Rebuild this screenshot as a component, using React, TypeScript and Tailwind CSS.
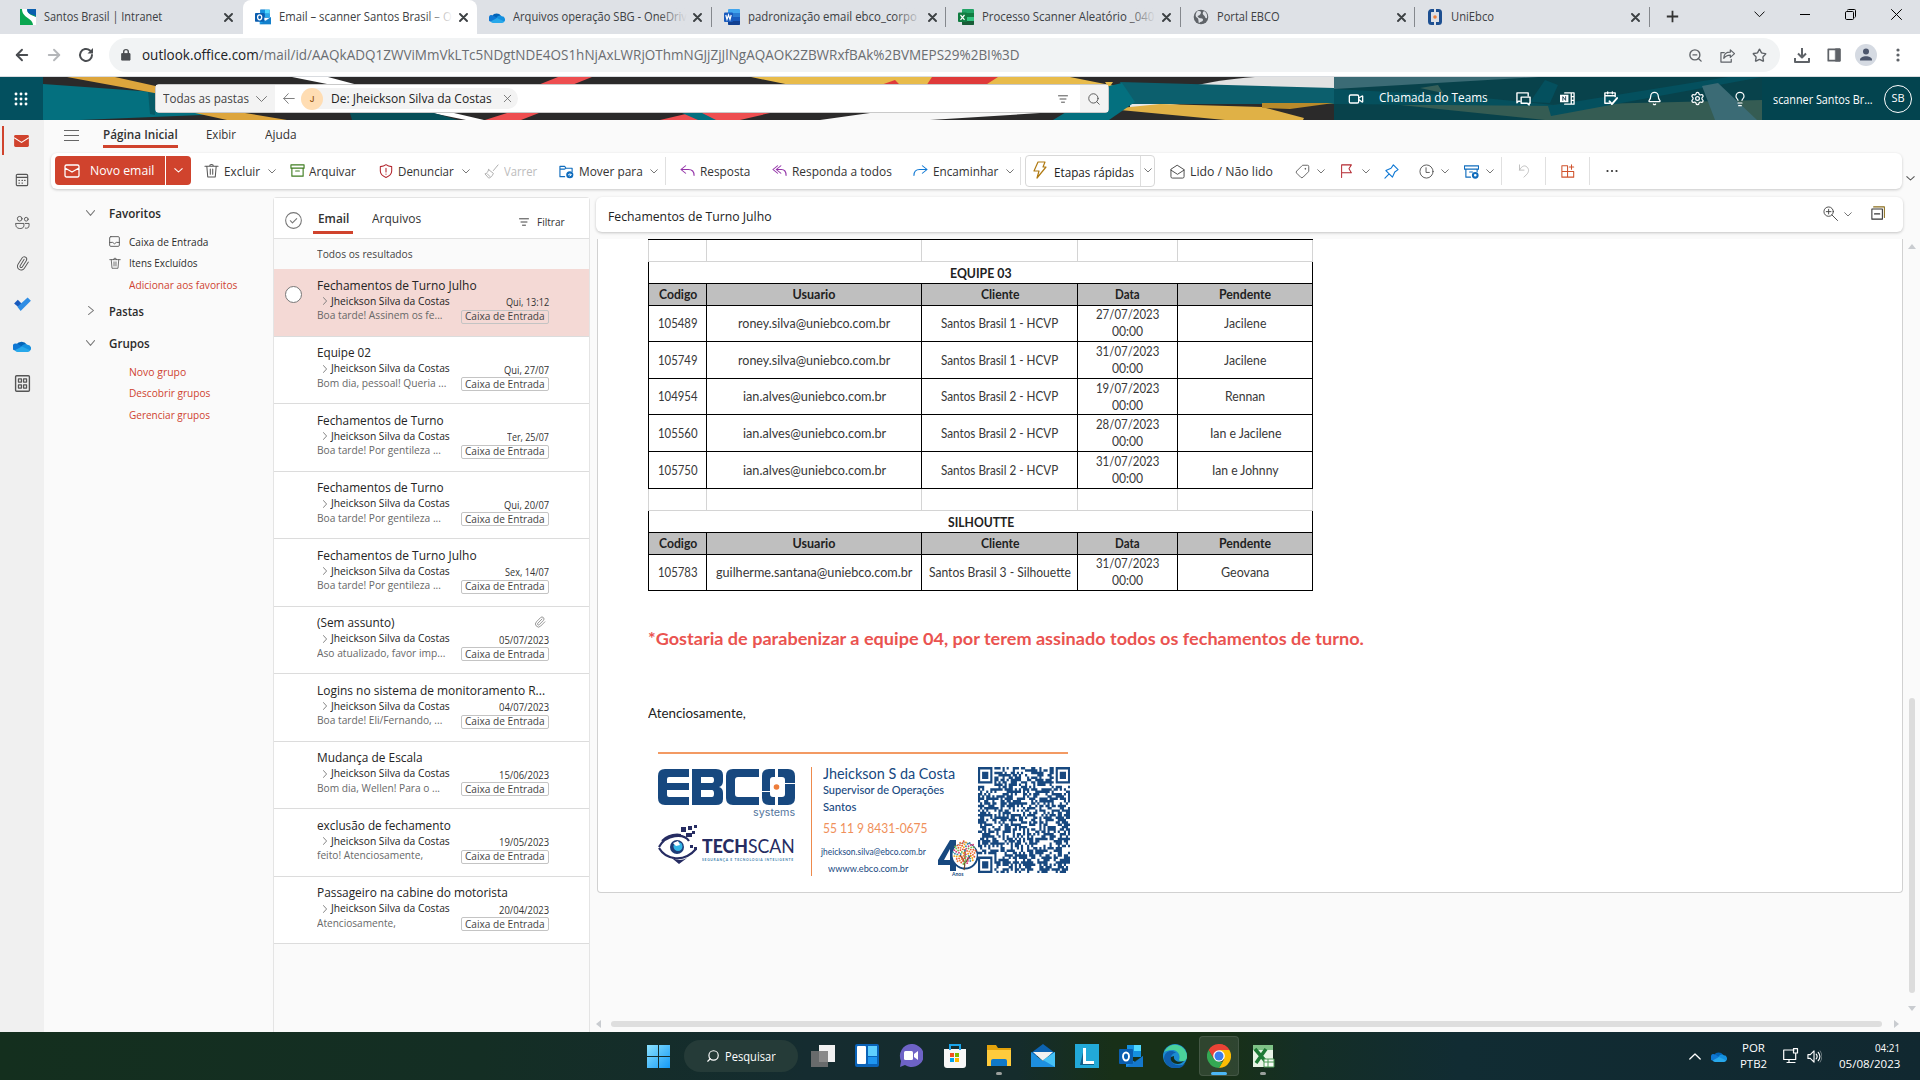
import React, { useLayoutEffect, useRef, useState } from "react";
import {
  ArrowLeft, ArrowRight, Bell, ChevronUp, Lightbulb, Paperclip, Search, Settings, Star, Tag, Video, X, ZoomIn, ZoomOut,
} from "lucide-react";

type TextProps = { w: number; className?: string; children: React.ReactNode };

/** One line of text condensed to a given width. */
function Fit({ w, className = "", children }: TextProps) {
  const ref = useRef<HTMLSpanElement>(null);
  const [scale, setScale] = useState(1);
  useLayoutEffect(() => {
    if (ref.current) setScale(w / ref.current.offsetWidth);
  }, [w]);
  return (
    <span className={"block shrink-0 whitespace-nowrap " + className} style={{ width: w }}>
      <span ref={ref} className="inline-block origin-left" style={{ transform: `scaleX(${scale})` }}>
        {children}
      </span>
    </span>
  );
}

type IcoProps = { className?: string; children: React.ReactNode; box?: string };
function Ico({ className = "", children, box = "0 0 16 16" }: IcoProps) {
  return (
    <svg viewBox={box} preserveAspectRatio="none" className={"block shrink-0 " + className} fill="none" stroke="currentColor" strokeWidth="1" strokeLinecap="round" strokeLinejoin="round">
      {children}
    </svg>
  );
}

const Chev = ({ className = "" }: { className?: string }) => (
  <Ico box="0 0 8 5" className={"h-[5px] w-2 text-[#777] " + className}><path d="M.7.7 4 4 7.3.7" /></Ico>
);

const OneDrive = ({ className = "" }: { className?: string }) => (
  <svg viewBox="0 0 20 14" preserveAspectRatio="none" className={"block shrink-0 " + className}>
    <path d="M4 5a6 5 0 0 1 11 0l-6 5H2a4 4 0 0 1 2-5Z" fill="#0364b8" />
    <path d="M1.500 12A4 4 0 0 1 5 4.500l7 4.500-6 4H4Z" fill="#0f78d4" />
    <path d="M9 8c2-4 6-4 7-2.500A4 4 0 0 1 18 13L8 11Z" fill="#1490df" />
    <path d="m2 12 8-4.500 9 4.500a3.500 3.500 0 0 1-2.500 2H5a4 4 0 0 1-3-2Z" fill="#28a8ea" />
  </svg>
);

const OutlookLogo = ({ className = "" }: { className?: string }) => (
  <svg viewBox="0 0 24 24" preserveAspectRatio="none" className={"block shrink-0 " + className}>
    <path d="M8 1h14v12H8Z" fill="#0f6cbd" />
    <path d="M15 1h7v6h-7Z" fill="#50d9ff" /><path d="M8 1h7v6H8Z" fill="#1490df" /><path d="M15 7h7v6h-7Z" fill="#28a8ea" />
    <path d="m7 12 9 6 8-6v11H7Z" fill="#1a9fe8" /><path d="m7 23 17-11v11Z" fill="#1066b5" opacity=".55" />
    <rect y="6" width="14" height="13" rx="1" fill="#0a5eb0" />
    <ellipse cx="7" cy="12.500" rx="3.100" ry="3.700" fill="none" stroke="#fff" strokeWidth="1.900" />
  </svg>
);

const OfficeDoc = ({ kind }: { kind: "W" | "X" }) => (
  <svg viewBox="0 0 16 16" className="block size-4 shrink-0">
    <rect x="4" width="12" height="16" rx="1" fill={kind === "W" ? "#41a5ee" : "#21a366"} />
    <path d="M4 4h12v4H4Z" fill={kind === "W" ? "#2b7cd3" : "#107c41"} />
    <path d="M4 8h12v4H4Z" fill={kind === "W" ? "#185abd" : "#33c481"} />
    <path d="M4 12h12v3a1 1 0 0 1-1 1H5a1 1 0 0 1-1-1Z" fill={kind === "W" ? "#103f91" : "#185c37"} />
    <rect y="3.500" width="9" height="9.500" rx="1" fill={kind === "W" ? "#185abd" : "#107c41"} />
    <path d={kind === "W" ? "m1.800 6 1.200 4.500L4.500 6 6 10.500 7.200 6" : "m2.500 6 4 4.800M6.500 6l-4 4.800"} stroke="#fff" strokeWidth="1.200" fill="none" />
  </svg>
);

const SantosLogo = () => (
  <svg viewBox="0 0 16 16" className="block size-4 shrink-0">
    <path d="M0 0h16v16H0Z" fill="#0aa650" /><path d="M8 0h8v8Z" fill="#0b66b0" /><path d="M2 0h6c-2 4 3 6 8 8v8h-3C13 9 2 9 2 0Z" fill="#fff" /><path d="M7 0h9v6C10 6 7 4 7 0Z" fill="#0b5fae" />
  </svg>
);
const Globe = () => (
  <svg viewBox="0 0 16 16" className="block size-4 shrink-0"><circle cx="8" cy="8" r="7.300" fill="#5f6368" /><path d="M4 2.500c3-1 5 0 3.500 2.500S4 6 5 8s5.500.5 5 3-3 1-4 3.500C5 12 6 10 4.500 9S1.500 7 4 2.500Zm7-.5c3 2 3.500 4.500 3 7-2 1-1.500-1.500-3-2.500s-2-3 0-4.500Z" fill="#dee1e6" /></svg>
);
const UniLogo = () => (
  <svg viewBox="0 0 16 16" className="block size-4 shrink-0"><path d="M7 1.500H4.500a2 2 0 0 0-2 2v9a2 2 0 0 0 2 2H7M9 1.500h2.500a2 2 0 0 1 2 2v9a2 2 0 0 1-2 2H9" fill="none" stroke="#1d4f91" strokeWidth="3" /><circle cx="8" cy="8" r="1.800" fill="#f0803c" /></svg>
);

const tabs = [
  { icon: <SantosLogo />, text: "Santos Brasil | Intranet", w: 118 },
  { icon: <OutlookLogo className="size-4" />, text: "Email – scanner Santos Brasil – O", w: 173, active: true, fade: true },
  { icon: <OneDrive className="h-[11px] w-4" />, text: "Arquivos operação SBG - OneDriv", w: 174, fade: true },
  { icon: <OfficeDoc kind="W" />, text: "padronização email ebco_corpo", w: 169, fade: true },
  { icon: <OfficeDoc kind="X" />, text: "Processo Scanner Aleatório _040", w: 172, fade: true },
  { icon: <Globe />, text: "Portal EBCO", w: 63 },
  { icon: <UniLogo />, text: "UniEbco", w: 43 },
];

function Browser() {
  return (
    <div>
      <div className="flex h-[34px] bg-[#dee1e6] pl-2">
        {tabs.map((t, i) => (
          <div key={t.text} className={"flex w-[234.500px] shrink-0 items-center pl-3 pr-[10px] " + (t.active ? "rounded-t-lg bg-white" : "")}>
            {t.icon}
            <div className="relative ml-2 w-[174px] overflow-hidden">
              <Fit w={t.w} className="text-[12.500px] leading-5 text-[#3c4043]">{t.text}</Fit>
              {t.fade && <div className={"absolute inset-y-0 right-0 w-7 bg-linear-to-r from-transparent " + (t.active ? "to-white" : "to-[#dee1e6]")} />}
            </div>
            <Ico box="0 0 9 9" className="ml-[6px] size-[9px] text-[#3c4043]"><path d="m1 1 7 7M8 1 1 8" strokeWidth="1.900" /></Ico>
            <div className={"ml-auto -mr-[10px] h-5 w-px " + (i > 1 ? "bg-[#85888d]" : "")} />
          </div>
        ))}
        <Ico className="mt-[10px] ml-4 size-[13px] text-[#333]"><path d="M8 1v14M1 8h14" strokeWidth="2.200" strokeLinecap="butt" /></Ico>
        <div className="ml-auto flex items-start gap-[35px] pt-[9px] pr-[18px] text-black">
          <Ico box="0 0 11 8" className="mt-[2px] h-[7px] w-[11px]"><path d="m.8 1 4.700 5.500L10.200 1" /></Ico>
          <Ico box="0 0 10 10" className="size-[10px]"><path d="M0 5.500h10" /></Ico>
          <Ico box="0 0 11 11" className="size-[11px]"><path d="M.5 3.500q0-1 1-1h6q1 0 1 1v6q0 1-1 1h-6q-1 0-1-1ZM2.500 1q.5-.5 1-.5h6q1 0 1 1v6q0 .7-.6 1" /></Ico>
          <Ico box="0 0 11 11" className="size-[11px]"><path d="m.5.5 10 10M10.500.5l-10 10" /></Ico>
        </div>
      </div>
      <div className="flex h-[43px] items-center border-b border-[#d9dce0] bg-white pl-[13px]">
        <ArrowLeft className="size-[18px] text-[#4a4d51]" strokeWidth={2.500} />
        <ArrowRight className="ml-[14px] size-[18px] text-[#b5b7ba]" strokeWidth={2.500} />
        <Ico className="ml-[15px] size-4 text-[#4a4d51]"><path d="M14 8a6 6 0 1 1-2-4.500" strokeWidth="2" /><path d="M15 1v5.500H9.500Z" fill="currentColor" stroke="none" /></Ico>
        <div className="ml-[15px] flex h-[34px] w-[1671px] items-center rounded-full bg-[#f1f3f4] pr-[13px] pl-[12px]">
          <Ico box="0 0 10 13" className="h-[12px] w-[10px] text-[#4a4d51]"><path d="M1 5h8v7H1Z" fill="currentColor" /><path d="M2.700 5V3a2.300 2.300 0 0 1 4.600 0v2" strokeWidth="1.400" /></Ico>
          <Fit w={878} className="ml-[11px] text-[14px] leading-5 text-[#6a6d71]"><span className="text-[#202124]">outlook.office.com</span>/mail/id/AAQkADQ1ZWViMmVkLTc5NDgtNDE4OS1hNjAxLWRjOThmNGJjZjJlNgAQAOK2ZBWRxfBAk%2BVMEPS29%2BI%3D</Fit>
          <div className="ml-auto flex items-center gap-[17px] text-[#5f6368]">
            <ZoomOut className="size-[15px]" strokeWidth={2.200} />
            <Ico className="size-[15px]"><path d="M4.500 5H1v10h11v-3M4 11c0-5 3-6.500 7-6.500V2l4.500 4L11 10V7.500C8 7.500 6 8 4 11Z" strokeWidth="1.300" /></Ico>
            <Star className="size-[15px]" strokeWidth={2.200} />
          </div>
        </div>
        <div className="ml-[14px] flex items-center text-[#5f6368]">
          <Ico className="size-4"><path d="M8 1v9M4 6.500 8 10.500l4-4M1 11v4h14v-4" strokeWidth="2" strokeLinecap="butt" /></Ico>
          <Ico className="ml-[17px] h-[14px] w-[14px]"><path d="M1.500 1.500h13v13h-13Z" strokeWidth="2" /><path d="M10 1h5v14h-5Z" fill="currentColor" /></Ico>
          <svg viewBox="0 0 22 22" className="ml-[14px] block size-[22px]"><circle cx="11" cy="11" r="11" fill="#d5dae2" /><circle cx="11" cy="7.500" r="3" fill="#4c566c" /><path d="M5 16c0-5 12-5 12 0v.5H5Z" fill="#4c566c" /></svg>
          <svg viewBox="0 0 4 14" className="ml-[19px] block h-[14px] w-1" fill="#5f6368"><circle cx="2" cy="2" r="1.600" /><circle cx="2" cy="7" r="1.600" /><circle cx="2" cy="12" r="1.600" /></svg>
        </div>
      </div>
    </div>
  );
}

function Suite() {
  return (
    <header className="relative h-[43px] overflow-hidden text-white">
      <svg viewBox="0 0 1920 43" className="absolute inset-0 block h-[43px] w-[1920px]">
        <path d="M0 0h1920v43H0Z" fill="#2b2a2a" />
        <path d="m43 7 112 8 95 21-170 7H43Z" fill="#04707f" /><path d="m148 14 7 1v23l-5-1Z" fill="#075a66" />
        <path d="M67 0h48l45 10v7Q110 8 67 0Z" fill="#dda53c" />
        <path d="M195 36h50l42 7h-60Z" fill="#dda53c" />
        <path d="M292 0h36l30 8h-26ZM432 36h22l30 7h-18Z" fill="#fff" />
        <path d="M558 0h34l-20 8h-34ZM507 36h32l-18 7h-36Z" fill="#ee4e50" />
        <path d="M350 36h84l24 7H352Z" fill="#074f58" />
        <path d="M751 0h319l50 10H800Z" fill="#e8bb4b" />
        <path d="m932 0h66l-14 9h-58ZM878 9l17-6 6 6Z" fill="#df3a3a" />
        <path d="m690 36 80 0-30 7h-80Z" fill="#ee4e50" /><path d="M682 36h20l14 7h-18Z" fill="#04707f" />
        <path d="M870 36h170l-110 7H820Z" fill="#f7f7f7" />
        <path d="M1195 9q20-6 60-9h79v14Z" fill="#e2e2e2" /><path d="m1130 26 50 1-50 5Z" fill="#e8e8e8" />
        <path d="m1120 31 40-4 102 3 42 11-1 2h-78l-105-10Z" fill="#e0b146" />
        <path d="m1120 5 214 6v16h-204Z" fill="#0c5f6d" /><path d="M1262 26h72l-44 6-28-1Z" fill="#b98a2a" />
        <path d="m1105 5 8 0-4 6Z" fill="#e8bb4b" />
        <path d="m1053 43 56-34 13-3 13 19-26 18Z" fill="#04707f" />
        <path d="M1334 0h586v43h-586Z" fill="#08424b" />
        <path d="M1334 0h205l-205 12Z" fill="#3b6b75" /><path d="m1420 11 18-3 5 8Z" fill="#365f59" />
        <path d="m1400 28 150 0 212-5v20h-217Z" fill="#355c53" /><path d="m1334 12 130 7 100 10-230-2Z" fill="#05505d" />
        <path d="m1548 29 180-29h34L1551 39Z" fill="#04505e" /><path d="m1530 25 15-22 13 5-8 18Z" fill="#04505e" />
        <path d="m1702 9 16-3 39 37h-42Z" fill="#3b6b75" />
        <path d="M1762 0h158v43h-158Z" fill="#03444f" /><path d="M0 0h43v43H0Z" fill="#03505f" />
      </svg>
      <div className="relative flex h-full items-center">
        <svg viewBox="0 0 14 14" className="ml-[14px] block size-[14px]" fill="#fff">
          {[2, 7, 12].map((y) => [2, 7, 12].map((x) => <circle key={`${x}${y}`} cx={x} cy={y} r="1.450" />))}
        </svg>
        <div className="ml-[127px] flex h-[29px] w-[954px] items-center rounded-sm border border-[#c9c9c9] bg-white text-[#444]">
          <div className="flex h-full w-[119px] items-center bg-[#f3f3f3] pl-[7px]">
            <Fit w={86} className="text-[13px]">Todas as pastas</Fit><Ico box="0 0 11 6" className="ml-[7px] h-[6px] w-[11px] text-[#777]"><path d="m.5.5 5 5 5-5" /></Ico>
          </div>
          <Ico className="ml-[8px] h-[11px] w-[12px] text-[#777]"><path d="M7 1 1 8l6 7M1 8h14" strokeWidth="1.300" /></Ico>
          <div className="ml-[6px] flex h-[21px] w-[217px] items-center rounded-full bg-[#f3f3f3]">
            <div className="flex size-[22px] shrink-0 items-center justify-center rounded-full bg-[#ffddb3] font-['Inter'] text-[8px] font-medium text-[#8a4b08]">J</div>
            <Fit w={161} className="ml-[8px] text-[13px] text-[#222]">De: Jheickson Silva da Costas</Fit>
            <X className="ml-[9px] size-[13px] text-[#666]" strokeWidth={1.500} />
          </div>
          <Ico box="0 0 10 8" className="mr-[12px] ml-auto h-2 w-[10px] text-[#555]"><path d="M.5.8h9M2 4h6M3.500 7.200h3" /></Ico>
          <div className="flex h-full w-7 items-center justify-center bg-[#f3f3f3]"><Search className="size-[14px] text-[#555]" strokeWidth={1.600} /></div>
        </div>
        <Video className="ml-[239px] size-4" strokeWidth={2} />
        <Fit w={109} className="ml-[15px] text-[12.500px] font-medium">Chamada do Teams</Fit>
        <Ico className="ml-[28px] size-[15px]"><path d="M4 11H2.500L1 12.500V2h12v3M5.500 6.500H15V13h-1v2l-2-2H5.500Z" strokeWidth="1.500" /></Ico>
        <Ico className="ml-[29px] size-[15px]"><path d="M5 2h10v12H5M12 2v12M12 6h3M12 10h3" strokeWidth="1.400" /><path d="M0 4h9v8H0Z" fill="#fff" stroke="none" /><path d="M3 10V6l3 4V6" stroke="#245" /></Ico>
        <Ico className="ml-[28px] size-[15px]"><path d="M7 13H2V2h11v4M2 5h11M5 1v2M10 1v2" strokeWidth="1.500" /><path d="m7 11 2.500 3L15 7.500" strokeWidth="2" /></Ico>
        <Bell className="ml-[29px] size-[15px]" strokeWidth={2} />
        <Settings className="ml-[28px] size-[15px]" strokeWidth={2} />
        <Lightbulb className="ml-[27px] size-[16px]" strokeWidth={1.800} />
        <Fit w={100} className="ml-[25px] pt-[2px] text-[12px]">scanner Santos Br...</Fit>
        <div className="ml-[11px] flex size-7 items-center justify-center rounded-full border border-white text-[11px]">SB</div>
      </div>
    </header>
  );
}

const MailIcon = ({ className = "" }: { className?: string }) => (
  <Ico className={className}><path d="M2.500 2h11A1.500 1.500 0 0 1 15 3.500v9a1.500 1.500 0 0 1-1.500 1.500h-11A1.500 1.500 0 0 1 1 12.500v-9A1.500 1.500 0 0 1 2.500 2ZM1 5l7 4 7-4" strokeWidth="1.300" /></Ico>
);
const TrashIcon = ({ className = "" }: { className?: string }) => (
  <Ico className={className}><path d="M1 3.500h14M3 3.500 4 15h8l1-11.500M6 3.500a2 2 0 0 1 4 0M6.700 6.500v5.500M9.300 6.500v5.500" strokeWidth="1.100" /></Ico>
);

const Label = ({ w, m, className = "text-[#333]", children }: { w: number; m: string; className?: string; children: string }) => (
  <Fit w={w} className={m + " -mt-px text-[13px] leading-5 " + className}>{children}</Fit>
);

const Sep = ({ m }: { m: string }) => <div className={"h-7 w-px bg-[#e0e0e0] " + m} />;

function Ribbon() {
  return (
    <div className="relative mx-[7px] mr-[18px] flex h-9 items-center rounded-md bg-white pl-1 shadow-[0_1px_3px_rgba(0,0,0,0.2)]">
      <div className="-mt-px flex h-[29px] w-[110px] items-center rounded-l bg-[#d0432d] pl-[9px] text-white">
        <MailIcon className="size-4" /><Fit w={64} className="ml-[10px] text-[13px] font-medium">Novo email</Fit>
      </div>
      <div className="-mt-px ml-px flex h-[29px] w-[25px] items-center justify-center rounded-r bg-[#d0432d]"><Ico box="0 0 8 5" className="h-[5px] w-[9px] text-white"><path d="M.7.7 4 4 7.300.7" /></Ico></div>
      <TrashIcon className="ml-[13px] -mt-px size-[15px] text-[#555]" /><Label w={36} m="ml-[5px]">Excluir</Label><Chev className="ml-2" />
      <Ico className="ml-[14px] -mt-px size-[15px] text-[#3f7d20]"><path d="M1 2h14v3.500H1ZM2 5.500V14h12V5.500M6 8.500h4" strokeWidth="1.200" /></Ico><Label w={47} m="ml-1">Arquivar</Label>
      <Ico className="ml-[23px] size-[14px] text-[#b3262e]"><path d="M8 .8C10 2.500 12 3 14.500 3v5c0 3-3 6-6.500 7.300C4.500 14 1.500 11 1.500 8V3C4 3 6 2.500 8 .8ZM8 5v4M8 11.500v.2" strokeWidth="1.200" /></Ico><Label w={56} m="ml-[5px]">Denunciar</Label><Chev className="ml-2" />
      <Ico className="ml-[14px] size-[15px] text-[#aaa]"><path d="m15 1-5 6M5 6l5 4-1 2c-1 2-3 3-4 3L1 10.500c2 0 3-2 4-4.500ZM3.500 10.500l3 3" /></Ico><Label w={33} m="ml-[5px]" className="text-[#bcbcbc]">Varrer</Label>
      <Ico className="ml-[22px] size-[15px] text-[#0f6cbd]"><path d="M6 13.500H1V2.500h5l1.500 2H14V8M1 5.500h5L7.500 4.500" strokeWidth="1.200" /><circle cx="11.500" cy="11.500" r="3.800" fill="#0f6cbd" stroke="none" /><path d="M10 11.500h3M11.700 10.200l1.300 1.300-1.300 1.300" stroke="#fff" /></Ico><Label w={64} m="ml-[5px]">Mover para</Label><Chev className="ml-[7px]" />
      <Sep m="ml-[7px]" />
      <Ico className="ml-[14px] h-3 w-[15px] text-[#9333a8]"><path d="M6 1 1 6l5 5M1 6h8c4 0 6 3 6 8" strokeWidth="1.200" /></Ico><Label w={50} m="ml-[5px]">Resposta</Label>
      <Ico className="ml-[22px] h-3 w-[15px] text-[#9333a8]"><path d="M6 1 1 6l5 5M9.500 1l-5 5 5 5M4.500 6H10c3 0 5 3 5 8" strokeWidth="1.200" /></Ico><Label w={100} m="ml-[5px]">Responda a todos</Label>
      <Ico className="ml-[21px] h-3 w-[15px] text-[#0f78d4]"><path d="m10 1 5 5-5 5M15 6H7c-4 0-6 3-6 8" strokeWidth="1.200" /></Ico><Label w={65} m="ml-[5px]">Encaminhar</Label><Chev className="ml-2" />
      <Sep m="ml-[6px]" />
      <div className="ml-[4px] -mt-px flex h-8 w-[130px] items-center rounded border border-[#d8d8d8]">
        <Ico box="0 0 14 18" className="ml-[7px] -mt-px h-[18px] w-[14px] text-[#b07a12]"><path d="M5 1h7l-2 5h3L4 17l2-7H1Z" strokeWidth="1.200" /></Ico><Label w={80} m="ml-[7px]" className="pt-[3px] text-[#222]">Etapas rápidas</Label>
        <div className="ml-[6px] flex h-full w-[14px] items-center justify-center border-l border-[#ddd]"><Chev /></div>
      </div>
      <Ico className="ml-[15px] size-[15px] text-[#444]"><path d="M1 6v7.500A1.500 1.500 0 0 0 2.500 15h11a1.500 1.500 0 0 0 1.500-1.500V6L8 1.500ZM1 6.500l7 4.500 7-4.500" /></Ico><Label w={83} m="ml-[5px]">Lido / Não lido</Label>
      <Tag className="ml-[22px] size-[15px] rotate-90 text-[#555]" strokeWidth={1.400} /><Chev className="ml-[7px]" />
      <Ico className="ml-[15px] h-[14px] w-[13px] text-[#b3262e]"><path d="M2 15.500V1h12l-3 4.500L14 10H2" strokeWidth="1.200" /></Ico><Chev className="ml-[9px] mt-px" />
      <Ico className="ml-[14px] size-[15px] text-[#0f78d4]"><path d="m10 1 5 5-3.500 2.500L9 14 2 7l5.500-2.500ZM5.500 10.500 1 15" strokeWidth="1.200" /></Ico>
      <Ico className="ml-5 size-[15px] text-[#555]"><circle cx="8" cy="8" r="7" /><path d="M7.500 4v5H11" /></Ico><Chev className="ml-[7px]" />
      <Ico className="ml-[15px] size-[15px] text-[#0f6cbd]"><path d="M.5 2h15v3.500H.5ZM2 5.500V14h5M14 5.500V8M6 8.500h3" strokeWidth="1.200" /><circle cx="12" cy="12" r="2.500" strokeWidth="2.200" /></Ico><Chev className="ml-[7px]" />
      <Sep m="ml-[7px]" />
      <Ico className="ml-4 h-[14px] w-3 text-[#bbb]"><path d="M2 1v6h6M2 7c3-5 7-6 10-3.500S14.500 9 12 11.500L8 15" strokeWidth="1.100" /></Ico>
      <Sep m="ml-[15px]" />
      <Ico className="ml-[15px] size-[14px] text-[#d0532d]"><path d="M1 2h6.500v13H1ZM1 8.500h13.500V15h-7M12 1v5M9.500 3.500h5" strokeWidth="1.200" /></Ico>
      <Sep m="ml-[14px]" />
      <svg viewBox="0 0 12 4" className="ml-[16px] h-1 w-[12px]" fill="#333"><circle cx="1.500" cy="2" r="1.100" /><circle cx="6" cy="2" r="1.100" /><circle cx="10.500" cy="2" r="1.100" /></svg>
      <Ico box="0 0 8 5" className="absolute -right-[13px] bottom-2 h-[5px] w-[9px] text-[#555]"><path d="M.7.7 4 4 7.300.7" /></Ico>
    </div>
  );
}

function Rail() {
  return (
    <nav className="flex w-11 shrink-0 flex-col items-center bg-[#f0f0f0] pt-[6px] text-[#555]">
      <div className="flex h-[29px] w-full items-center pl-[2px]"><div className="h-[29px] w-[2px] bg-[#d0432d]" /><svg viewBox="0 0 16 13" className="ml-[10px] block h-3 w-[15px]"><rect width="16" height="13" rx="1.500" fill="#d0432d" /><path d="m0 3 8 5 8-5" fill="none" stroke="#fff" strokeWidth="1.200" /></svg></div>
      <Ico className="mt-[18px] size-[14px]"><path d="M3 1.500h10a1.500 1.500 0 0 1 1.500 1.500v10a1.500 1.500 0 0 1-1.500 1.500H3A1.500 1.500 0 0 1 1.500 13V3A1.500 1.500 0 0 1 3 1.500ZM1.500 5h13M4.500 8.500h.5M8 8.500h.5M11 8.500h.5M4.500 11.500h.5M8 11.500h.5" strokeWidth="1.300" /></Ico>
      <Ico className="mt-[28px] size-[15px]"><circle cx="5" cy="4" r="2.500" /><circle cx="12" cy="4.500" r="2" /><path d="M1 9h8.500v2.500c0 4-8.500 4-8.500 0ZM11 9h4v2c0 3-2 3.500-4 3" /></Ico>
      <Paperclip className="mt-[26px] size-[15px] -rotate-12" strokeWidth={1.500} />
      <svg viewBox="0 0 18 15" className="mt-[26px] block h-[14px] w-[17px]"><path d="m0 7 4-4 5 5-3 4Z" fill="#195abd" /><path d="m3.500 10.500 11-10L18 4 7 15Z" fill="#2f8de4" /></svg>
      <OneDrive className="mt-[29px] h-3 w-[18px]" />
      <Ico className="mt-[23px] size-[17px]"><path d="M2.500.7h11q1 0 1 1v12.600q0 1-1 1h-11q-1 0-1-1V1.700q0-1 1-1Z" strokeWidth="1.300" /><path d="M4.200 3.700h2.800v3H4.200ZM9 3.700h2.800v3H9ZM4.200 9.300h2.800v3H4.200ZM9 9.300h2.800v3H9Z" strokeWidth="1.200" /></Ico>
    </nav>
  );
}

function Folders() {
  const link = "text-[11.500px] leading-[21.500px] text-[#cf4330]";
  const down = <Ico box="0 0 9 5" className="-mt-[2px] h-[6px] w-[9px] text-[#777]"><path d="m.5.5 4 4 4-4" /></Ico>;
  return (
    <aside className="flex w-[229px] shrink-0 flex-col pt-2 pl-[42px] text-[#2b2b2b]">
      <div className="flex h-[34px] items-center">{down}<Fit w={52} className="ml-[14px] text-[13px] font-semibold">Favoritos</Fit></div>
      <div className="-mt-px flex h-[22px] items-center pt-px pl-[23px]"><Ico box="0 0 12 12" className="size-[11px] text-[#555]"><path d="M2 .7h8q1.300 0 1.300 1.300v8q0 1.300-1.300 1.300H2Q.7 11.300.7 10V2Q.7.7 2 .7ZM.7 7H4q2 3 4 0h3.300" /></Ico><Fit w={79} className="ml-[9px] text-[11.500px]">Caixa de Entrada</Fit></div>
      <div className="flex h-[22px] items-center pl-[23px]"><TrashIcon className="-mt-px size-[12px] text-[#555]" /><Fit w={69} className="ml-2 text-[11.500px]">Itens Excluídos</Fit></div>
      <Fit w={108} className={"ml-[43px] " + link}>Adicionar aos favoritos</Fit>
      <div className="mt-[6px] flex h-[20px] items-center pl-[2px]"><Ico box="0 0 5 9" className="-mt-[3px] h-[9px] w-[6px] text-[#777]"><path d="m.5.5 4 4-4 4" /></Ico><Fit w={35} className="ml-[15px] text-[13px] font-semibold">Pastas</Fit></div>
      <div className="mt-[12px] flex h-[20px] items-center">{down}<Fit w={41} className="ml-[14px] text-[13px] font-semibold">Grupos</Fit></div>
      <div className="mt-[7px] ml-[43px]"><Fit w={57} className={link}>Novo grupo</Fit><Fit w={81} className={link}>Descobrir grupos</Fit><Fit w={81} className={link}>Gerenciar grupos</Fit></div>
    </aside>
  );
}

type Mail = { t: string; tw: number; d: string; dw: number; p: string; pw: number; clip?: boolean };
const mails: Mail[] = [
  { t: "Fechamentos de Turno Julho", tw: 160, d: "Qui, 13:12", dw: 43, p: "Boa tarde! Assinem os fe...", pw: 126 },
  { t: "Equipe 02", tw: 54, d: "Qui, 27/07", dw: 45, p: "Bom dia, pessoal! Queria ...", pw: 129 },
  { t: "Fechamentos de Turno", tw: 127, d: "Ter, 25/07", dw: 42, p: "Boa tarde! Por gentileza ...", pw: 124 },
  { t: "Fechamentos de Turno", tw: 127, d: "Qui, 20/07", dw: 45, p: "Boa tarde! Por gentileza ...", pw: 124 },
  { t: "Fechamentos de Turno Julho", tw: 160, d: "Sex, 14/07", dw: 44, p: "Boa tarde! Por gentileza ...", pw: 124 },
  { t: "(Sem assunto)", tw: 78, d: "05/07/2023", dw: 50, p: "Aso atualizado, favor imp...", pw: 128, clip: true },
  { t: "Logins no sistema de monitoramento R...", tw: 228, d: "04/07/2023", dw: 50, p: "Boa tarde! Eli/Fernando, ...", pw: 125 },
  { t: "Mudança de Escala", tw: 106, d: "15/06/2023", dw: 50, p: "Bom dia, Wellen! Para o ...", pw: 123 },
  { t: "exclusão de fechamento", tw: 134, d: "19/05/2023", dw: 50, p: "feito! Atenciosamente,", pw: 106 },
  { t: "Passageiro na cabine do motorista", tw: 191, d: "20/04/2023", dw: 50, p: "Atenciosamente,", pw: 79 },
];

function MailList() {
  return (
    <section className="mt-2 flex w-[317px] shrink-0 flex-col rounded-t border border-b-0 border-[#e4e4e4] bg-[#fafafa]">
      <div className="flex h-[41px] shrink-0 items-start border-b border-[#e0e0e0] bg-white pl-[11px] text-[#333]">
        <Ico className="mt-[14px] size-[17px] text-[#777]"><circle cx="8" cy="8" r="7.400" /><path d="m5 8.200 2 2 4-4" /></Ico>
        <div className="ml-[11px] flex h-[36px] w-[40px] justify-center border-b-[3px] border-[#d0432d] pt-[10px]"><Fit w={31} className="text-[13px] leading-5 font-semibold">Email</Fit></div>
        <Fit w={49} className="mt-[10px] ml-[19px] text-[13px] leading-5">Arquivos</Fit>
        <Ico box="0 0 10 8" className="mt-[20px] ml-[98px] h-2 w-[10px] text-[#444]"><path d="M.5.8h9M2 4h6M3.500 7.200h3" /></Ico>
        <Fit w={28} className="mt-[14px] ml-[8px] text-[11.500px] leading-5">Filtrar</Fit>
      </div>
      <div className="flex h-[30px] shrink-0 items-center pl-[43px] text-[#444]"><Fit w={96} className="text-[11.500px] font-medium">Todos os resultados</Fit></div>
      {mails.map((m, i) => (
        <article key={m.d + m.p} className={"flex h-[67.500px] shrink-0 border-b border-[#dcdcdc] pl-[11px] " + (i === 0 ? "bg-[#f4d9d5]" : "bg-white")}>
          <div className="w-[32px] shrink-0 pt-[17px]">{i === 0 && <div className="size-[17px] rounded-full border border-[#777] bg-white" />}</div>
          <div className="w-[232px] pt-[6px]">
            <div className="flex h-[19px] items-center justify-between"><Fit w={m.tw} className="text-[13px] leading-[18px] text-[#242424]">{m.t}</Fit>{m.clip && <Paperclip className="mr-[3px] size-3 text-[#777]" strokeWidth={1.500} />}</div>
            <div className="flex h-[14px] items-center">
              <Ico box="0 0 5 8" className="ml-[6px] h-[8px] w-[4px] text-[#777]"><path d="m.5.5 4 3.500-4 3.500" /></Ico><Fit w={119} className="-mt-px ml-[4px] text-[11.500px] leading-[14px] text-[#242424]">Jheickson Silva da Costas</Fit>
              <Fit w={m.dw} className="mt-[2px] ml-auto text-[10px] leading-[14px] text-[#333]">{m.d}</Fit>
            </div>
            <div className="flex h-[15px] items-center justify-between"><Fit w={m.pw} className="-mt-px text-[11.500px] leading-[14px] text-[#686868]">{m.p}</Fit>
              <div className="mt-[2px] flex h-[14px] w-[88px] items-center justify-center rounded-[2px] border border-[#c4c4c4]"><Fit w={80} className="-mt-px text-[11px] leading-3 text-[#444]">Caixa de Entrada</Fit></div></div>
          </div>
        </article>
      ))}
    </section>
  );
}

type Row = [string, string, number, string, number, string, string, number];
const team: Row[] = [
  ["105489", "roney.silva@uniebco.com.br", 152, "Santos Brasil 1 - HCVP", 117, "27/07/2023", "Jacilene", 42],
  ["105749", "roney.silva@uniebco.com.br", 152, "Santos Brasil 1 - HCVP", 117, "31/07/2023", "Jacilene", 42],
  ["104954", "ian.alves@uniebco.com.br", 143, "Santos Brasil 2 - HCVP", 117, "19/07/2023", "Rennan", 40],
  ["105560", "ian.alves@uniebco.com.br", 143, "Santos Brasil 2 - HCVP", 117, "28/07/2023", "Ian e Jacilene", 71],
  ["105750", "ian.alves@uniebco.com.br", 143, "Santos Brasil 2 - HCVP", 117, "31/07/2023", "Ian e Johnny", 67],
];
const sil: Row[] = [["105783", "guilherme.santana@uniebco.com.br", 196, "Santos Brasil 3 - Silhouette", 142, "31/07/2023", "Geovana", 48]];
const cols = "grid grid-cols-[58px_215px_156px_100px_135px]";
const cell = "flex flex-col items-center justify-center border-r border-b border-black";

function TableRow({ r, short }: { r: Row; short?: boolean }) {
  return (
    <div className={cols + " border-l border-black leading-[17px] text-[#383838] " + (short ? "h-9" : "h-[37px]")}>
      <div className={cell}><Fit w={40}>{r[0]}</Fit></div>
      <div className={cell}><Fit w={r[2]}>{r[1]}</Fit></div>
      <div className={cell}><Fit w={r[4]}>{r[3]}</Fit></div>
      <div className={cell}><Fit w={63}>{r[5]}</Fit><Fit w={31}>00:00</Fit></div>
      <div className={cell}><Fit w={r[7]}>{r[6]}</Fit></div>
    </div>
  );
}
function TableHead({ title, w }: { title: string; w: number }) {
  return (
    <>
      <div className={cols + " h-[22px] border-l border-[#d4d4d4]"}>{[0, 1, 2, 3, 4].map((i) => <div key={i} className="border-r border-b border-[#d4d4d4]" />)}</div>
      <div className="flex h-[22px] items-center justify-center border-x border-b border-black pt-[3px]"><Fit w={w} className="font-bold">{title}</Fit></div>
      <div className={cols + " h-[21px] border-l border-black bg-[#bfbfbf] font-bold"}>
        <div className={cell + " pt-[2px]"}><Fit w={38}>Codigo</Fit></div><div className={cell + " pt-[2px]"}><Fit w={43}>Usuario</Fit></div><div className={cell + " pt-[2px]"}><Fit w={38}>Cliente</Fit></div><div className={cell + " pt-[2px]"}><Fit w={25}>Data</Fit></div><div className={cell + " pt-[2px]"}><Fit w={52}>Pendente</Fit></div>
      </div>
    </>
  );
}

function qrPath() {
  const n = 45;
  let seed = 12345;
  let d = "";
  for (let y = 0; y < n; y++)
    for (let x = 0; x < n; x++) {
      seed = (seed * 1103515245 + 12345) % 2147483648;
      const fx = x < 8 ? x : x > n - 9 ? x - (n - 7) : -9;
      const fy = y < 8 ? y : y > n - 9 ? y - (n - 7) : -9;
      let on = seed / 2147483648 > 0.45;
      if (fx > -9 && fy > -9 && !(x > 8 && y > 8)) {
        const r = Math.max(Math.abs(fx - 3), Math.abs(fy - 3));
        on = r === 3 || r < 2;
      }
      if (on) d += `M${x} ${y}h1.05v1.05h-1.05z`;
    }
  return d;
}
const qr = qrPath();
const leafColors = ["#e4572e", "#f3a712", "#3b8ea5", "#d64078", "#79b84b", "#e4572e", "#f0803c"];
const leaves = Array.from({ length: 75 }, (_, i) => ({
  x: 28 + Math.cos(i * 2.4) * Math.sqrt(i) * 1.35,
  y: 12.5 + Math.sin(i * 2.4) * Math.sqrt(i) * 1.35,
  c: leafColors[i % 7],
}));

function Signature() {
  return (
    <div className="ml-[9px] w-[412px]">
      <div className="h-[2px] w-[410px] bg-[#f39a63]" />
      <div className="mt-[13px] flex">
        <div className="w-[154px] shrink-0 border-r border-[#ee8a4c]">
          <svg viewBox="0 0 137 36" className="mt-[2px] block h-[36px] w-[137px]" fill="#17487f">
            <path d="M31 0v8H11q-2 0-2 2v4h22v7H9v5q0 2 2 2h20v8H7q-7 0-7-7V7q0-7 7-7Z" />
            <path fillRule="evenodd" d="M34 0h24q7 0 7 6v6q0 5-4 6 4 1 4 6v6q0 6-7 6H34Zm9 8v6h11q2 0 2-3t-2-3Zm0 13v7h11q2 0 2-3.500t-2-3.500Z" />
            <path d="M101 0v8H80q-3 0-3 3v14q0 3 3 3h21v8H75q-7 0-7-7V7q0-7 7-7Z" />
            <path d="M117 0v8h-2q-3 0-3 3v4h-8V7q0-7 7-7ZM120 0v8h4q3 0 3 3v4h10V7q0-7-7-7ZM104 22v7q0 7 7 7h6v-8h-2q-3 0-3-3v-3ZM137 22v7q0 7-7 7h-10v-8h4q3 0 3-3v-3ZM104 14h8v9h-8ZM127 14h10v9h-10Z" />
            <circle cx="118.500" cy="18" r="2.800" fill="#ee7d3a" />
          </svg>
          <Fit w={42} className="mt-[2px] ml-[95px] font-['Inter'] text-[10px] leading-[11px] text-[#54769d]">systems</Fit>
          <div className="mt-[7px] flex">
            <svg viewBox="0 0 40 40" className="block h-[40px] w-[40px]" fill="none">
              <path d="M1 22C8 9 26 8 31 16M1 23C8 35 26 38 38 24M4 16C9 11 16 9 23 10" stroke="#262c62" strokeWidth="2.200" />
              <path d="M10 30q9 8 19 3l-8 6Z" fill="#262c62" /><circle cx="19" cy="22" r="7" fill="#1c3b77" /><circle cx="20" cy="21.500" r="4.500" fill="#32b6e8" /><path d="m15 18 5-2 2 4-4 1Z" fill="#fff" />
              <path d="M23 2h5v5h-5ZM30 1h4v4h-4ZM28 8h6v4h-6ZM36 0h3v3h-3ZM34 6h3v3h-3ZM32 20h3v3h-3ZM36 22h3v3h-3Z" fill="#262c62" />
            </svg>
            <div className="ml-1 pt-[11px] font-['Lato'] text-[#262c62]"><Fit w={93} className="text-[19px] leading-[20px]"><b className="font-black">TECH</b>SCAN</Fit><Fit w={92} className="mt-px text-[4.500px] leading-[6px] font-bold tracking-[1px] text-[#3f7fae]">SEGURANÇA E TECNOLOGIA INTELIGENTE</Fit></div>
          </div>
        </div>
        <div className="relative ml-[9px] h-[109px] w-[157px] shrink-0 font-['Lato'] text-[#17487f]">
          <Fit w={132} className="ml-[2px] -mt-[2px] text-[15.500px] leading-[17px]">Jheickson S da Costa</Fit>
          <Fit w={121} className="ml-[2px] text-[12px] leading-[16.500px] font-medium">Supervisor de Operações</Fit>
          <Fit w={33} className="ml-[2px] text-[12px] leading-[16px] font-medium">Santos</Fit>
          <Fit w={105} className="mt-[3px] ml-[2px] text-[14px] leading-[19px] text-[#f0905a]">55 11 9 8431-0675</Fit>
          <Fit w={105} className="mt-[6px] text-[10px] leading-4">jheickson.silva@ebco.com.br</Fit>
          <Fit w={80} className="mt-px ml-[7px] text-[10px] leading-4">wwww.ebco.com.br</Fit>
          <svg viewBox="0 0 40 36" className="absolute right-0 bottom-0 block h-[36px] w-[40px]">
            <path fillRule="evenodd" d="M12 0h6v31h-6v-6H0v-5Zm0 9-6 11h6Z" fill="#17487f" /><circle cx="27" cy="16" r="12.500" fill="none" stroke="#17487f" strokeWidth="2" /><circle cx="26.500" cy="15" r="12" fill="#fff" />
            <path d="M26 30c2-7 0-10-4-15m5 8 6-8m-6 4V9" stroke="#6d4326" strokeWidth="1.300" fill="none" />
            {leaves.map((l, i) => <circle key={i} cx={l.x - 1.500} cy={l.y} r=".95" fill={l.c} />)}
            <text x="14" y="35.500" fontSize="5" fontWeight="700" fill="#17487f">Anos</text>
          </svg>
        </div>
        <svg viewBox="0 0 45 45" preserveAspectRatio="none" className="block h-[106px] w-[92px] shrink-0"><path d={qr} fill="#17487f" /></svg>
      </div>
    </div>
  );
}

function Reading() {
  return (
    <main className="mt-2 ml-[6px] flex flex-1 flex-col">
      <div className="mr-[17px] flex h-[35px] shrink-0 items-center rounded-md bg-white pl-3 shadow-[0_1px_3px_rgba(0,0,0,0.22)]">
        <Fit w={164} className="pt-[5px] text-[13px] font-medium text-[#222]">Fechamentos de Turno Julho</Fit>
        <Ico className="mt-[-3px] ml-auto size-[15px] text-[#444]"><circle cx="6" cy="6" r="5" /><path d="m9.500 9.500 6 6M6 3.500v5M3.500 6h5" /></Ico><Chev className="ml-[6px]" />
        <Ico className="mr-[18px] ml-[19px] mt-[-3px] size-[14px] text-[#333]"><path d="M1 3.500h12V15H1ZM4 9h6" strokeWidth="1.200" /><path d="M3 1h12.300v12" stroke="#8a6d1c" strokeWidth="1.200" /></Ico>
      </div>
      <div className="flex">
        <article className="mt-[7px] ml-px h-[654px] w-[1306px] shrink-0 rounded-b border border-t-0 border-[#d1d1d1] bg-white pl-[50px] text-[#222]">
          <div className="w-[665px] border-t border-black font-['Lato'] text-[12.500px]">
            <TableHead title="EQUIPE 03" w={62} />
            {team.map((r, i) => <TableRow key={r[0]} r={r} short={i === 2} />)}
            <TableHead title="SILHOUTTE" w={66} />
            {sil.map((r) => <TableRow key={r[0]} r={r} />)}
          </div>
          <Fit w={716} className="mt-[36px] font-['Lato'] text-[17.500px] leading-6 font-bold text-[#ea5350]">*Gostaria de parabenizar a equipe 04, por terem assinado todos os fechamentos de turno.</Fit>
          <Fit w={98} className="mt-[52px] font-['Lato'] text-[13.500px] leading-5">Atenciosamente,</Fit>
          <div className="mt-[29px] ml-px"><Signature /></div>
        </article>
        <div className="ml-[5px] flex h-[782px] w-[8px] flex-col items-center pt-[12px]">
          <svg viewBox="0 0 8 5" className="block h-[5px] w-2"><path d="M0 5 4 0l4 5Z" fill="#c9ccd0" /></svg>
          <div className="mt-[449px] h-[295px] w-[6px] shrink-0 rounded-full bg-[#dcdcdc]" />
          <svg viewBox="0 0 8 5" className="mt-[13px] block h-[5px] w-2 shrink-0"><path d="m0 0 4 5 4-5Z" fill="#c9ccd0" /></svg>
        </div>
      </div>
      <div className="mt-auto flex h-[16px] items-center"><svg viewBox="0 0 5 8" className="block h-2 w-[5px]"><path d="M5 0 0 4l5 4Z" fill="#c9ccd0" /></svg><div className="ml-[10px] h-[6px] w-[1271px] rounded-full bg-[#dedede]" /><svg viewBox="0 0 5 8" className="ml-[12px] block h-2 w-[5px]"><path d="m0 0 5 4-5 4Z" fill="#c9ccd0" /></svg></div>
    </main>
  );
}

const apps: { name: string; art: React.ReactNode; run?: boolean; on?: boolean }[] = [
  { name: "tasks", art: <><path d="M8 1h16v17H8Z" fill="#f1f1f1" /><path d="M0 7h17v16H0Z" fill="#777" opacity=".85" /></> },
  { name: "widgets", art: <><rect y="0" width="24" height="23" rx="2" fill="#0a63b8" /><rect x="2" y="2" width="9" height="18" rx="1" fill="#fff" /><path d="M13 2h9v10h-9Z" fill="#5fd0ff" /><path d="M13 13h9v7h-9Z" fill="#1e96f0" /></> },
  { name: "chat", art: <><path d="M12 0a12 11.500 0 1 1-6 21l-5 2 1-6A12 12 0 0 1 12 0Z" fill="#6e63c6" /><rect x="5" y="7" width="9" height="9" rx="1.500" fill="#fff" /><path d="m15 10 4-3v9l-4-3Z" fill="#fff" /></> },
  { name: "store", art: <><path d="M1 5h22v16q0 3-3 3H4q-3 0-3-3Z" fill="#f7f7f7" /><path d="M7 6V1h10v5" stroke="#1aa3e8" strokeWidth="2" fill="none" /><path d="M7 9h4v4H7Z" fill="#f25022" /><path d="M12 9h4v4h-4Z" fill="#7fba00" /><path d="M7 14h4v4H7Z" fill="#00a4ef" /><path d="M12 14h4v4h-4Z" fill="#ffb900" /></> },
  { name: "files", run: true, art: <><path d="M0 1h9l2 3h13v8H0Z" fill="#e2a20b" /><path d="M0 6h24v16H0Z" fill="#ffcb3c" /><path d="M4 22v-5q0-2 2-2h12q2 0 2 2v5Z" fill="#1079c9" /></> },
  { name: "mail", art: <><path d="M0 9 12 0l12 9v3H0Z" fill="#0c62b0" /><path d="M2 8h20l-10 9Z" fill="#f1f1f1" /><path d="m0 8 12 9 12-9v15H0Z" fill="#1d8fe0" /><path d="M24 8v15L12 16Z" fill="#45c1f5" /></> },
  { name: "L", art: <><path d="M0 0h24v24H0Z" fill="#22a9d8" /><path d="m5 21 4-17v13h10v4Z" fill="#135f8a" /><path d="M8 4h3v13h8v3H8Z" fill="#fff" /></> },
  { name: "outlook", art: <><path d="M8 1h14v12H8Z" fill="#1490df" /><path d="M15 1h7v6h-7Z" fill="#50d9ff" /><path d="m7 12 9 6 8-6v11H7Z" fill="#1a8fe8" /><path d="m7 23 17-11v11Z" fill="#1066b5" opacity=".55" /><rect y="5" width="14" height="15" rx="1" fill="#0a5eb0" /><ellipse cx="7" cy="12.500" rx="3" ry="4" fill="none" stroke="#fff" strokeWidth="1.900" /></> },
  { name: "edge", art: <><circle cx="12" cy="12" r="12" fill="#1b8bd1" /><path d="M1 8a12 12 0 0 1 23 5c0 4-6 6-8 3 2-6-2-10-7-10-4 0-6 1-8 2Z" fill="#4bd19a" /><path d="M8 14c0 6 6 9 14 6A12 12 0 0 1 1 15C1 7 9 5 13 9c-3 0-5 2-5 5Z" fill="#0f5fae" /><path d="M11 12c-1 5 5 7 10 5-5 6-15 2-13-4Z" fill="#14301f" /></> },
  { name: "chrome", run: true, on: true, art: <><path d="M12 0A12 12 0 0 1 22.400 6H12Z" fill="#ea4335" /><path d="M12 6h10.400A12 12 0 0 1 12 24l5.200-9Z" fill="#fbbc04" /><path d="M12 6h10.400A12 12 0 0 0 1.600 6l5.200 9Z" fill="#ea4335" /><path d="M1.600 6 6.800 15 12 18h3.500L12 24A12 12 0 0 1 1.600 6Z" fill="#34a853" /><circle cx="12" cy="12" r="5.800" fill="#fff" /><circle cx="12" cy="12" r="4.500" fill="#3b7ded" /></> },
  { name: "excel", run: true, art: <><path d="M2 1h20v22H2Z" fill="#e8f4e6" /><path d="M2 1h20v5H2Z" fill="#7fc387" /><path d="m4 5 12 14M15 5 5 19" stroke="#1e7a36" strokeWidth="3.500" /><path d="M13 15h10v8H13Z" fill="#f7fbf6" stroke="#4a9a55" /><path d="M13 18h10M17 15v8" stroke="#4a9a55" /></> },
];

function Taskbar() {
  return (
    <footer className="flex h-12 items-center bg-[linear-gradient(90deg,#142f1e_0%,#142e24_25%,#152c30_42%,#152c2c_53%,#183018_58%,#183018_64%,#142e26_68%,#112c33_76%,#112830_100%)] text-white">
      <svg viewBox="0 0 23 23" className="ml-[647px] block size-[23px]"><defs><linearGradient id="win" x2="1" y2="1"><stop stopColor="#8be2ff" /><stop offset="1" stopColor="#1499f5" /></linearGradient></defs><path d="M0 0h11v11H0ZM12 0h11v11H12ZM0 12h11v11H0ZM12 12h11v11H12Z" fill="url(#win)" /></svg>
      <div className="ml-[14px] flex h-8 w-[114px] items-center rounded-full bg-[#253b38] pl-[22px]"><Search className="size-[14px] -scale-x-100" strokeWidth={2} /><Fit w={51} className="ml-[5px] pt-px text-[12px]">Pesquisar</Fit></div>
      <div className="ml-[3px] flex">
        {apps.map((a) => (
          <div key={a.name} className={"mx-[2px] flex h-10 w-10 flex-col items-center rounded pt-2 " + (a.on ? "border border-white/10 bg-white/10 !pt-[7px]" : "")}>
            <svg viewBox="0 0 24 24" className="block size-6">{a.art}</svg>
            {a.run && <div className={"mt-[4px] h-[3px] rounded-full " + (a.on ? "w-4 bg-[#4cb8f5]" : "w-[6px] bg-[#9a9f9c]")} />}
          </div>
        ))}
      </div>
      <div className="ml-auto flex items-center pr-5">
        <Ico box="0 0 12 7" className="h-[7px] w-3"><path d="m.8 6 5.200-5 5.200 5" strokeWidth="1.300" /></Ico>
        <OneDrive className="ml-[10px] h-[11px] w-[16px]" />
        <div className="ml-[13px] flex flex-col items-center text-[11px] leading-4"><Fit w={23}>POR</Fit><Fit w={27}>PTB2</Fit></div>
        <Ico className="ml-4 size-4"><path d="M11 2H.7v9.500h12V8M4 14.500h8M6 12v2M10.500.7h4V5h-4ZM12.700 5v3" strokeWidth="1.200" /></Ico>
        <Ico className="ml-2 size-[15px]"><path d="M1 6v4h2.500L7.500 14V2L3.500 6ZM9.800 5.500q2 2.500 0 5M12 3.500q3.500 4.500 0 9" strokeWidth="1.200" /><path d="M14 2q4 6 0 12" opacity=".4" /></Ico>
        <div className="ml-[17px] flex flex-col items-end text-[11px] leading-4"><Fit w={25}>04:21</Fit><Fit w={61}>05/08/2023</Fit></div>
      </div>
    </footer>
  );
}

export default function App() {
  return (
    <div className="flex h-[1080px] w-[1920px] flex-col overflow-hidden bg-[#fafafa] font-['Open_Sans',sans-serif]">
      <Browser />
      <Suite />
      <div className="flex min-h-0 flex-1">
        <Rail />
        <div className="flex flex-1 flex-col">
          <div className="flex h-[33px] shrink-0 items-start pl-[20px] text-[13px] leading-5 text-[#333]">
            <Ico box="0 0 15 11" className="mt-[10px] h-[11px] w-[15px] text-[#666]"><path d="M0 .5h15M0 5.500h15M0 10.500h15" strokeLinecap="butt" /></Ico>
            <div className="ml-[24px] h-[28px] border-b-[3px] border-[#d0432d] pt-[4px]"><Fit w={75} className="font-semibold">Página Inicial</Fit></div>
            <Fit w={30} className="mt-[4px] ml-[28px]">Exibir</Fit>
            <Fit w={32} className="mt-[4px] ml-[29px]">Ajuda</Fit>
          </div>
          <Ribbon />
          <div className="flex min-h-0 flex-1">
            <Folders />
            <MailList />
            <Reading />
          </div>
        </div>
      </div>
      <Taskbar />
    </div>
  );
}
